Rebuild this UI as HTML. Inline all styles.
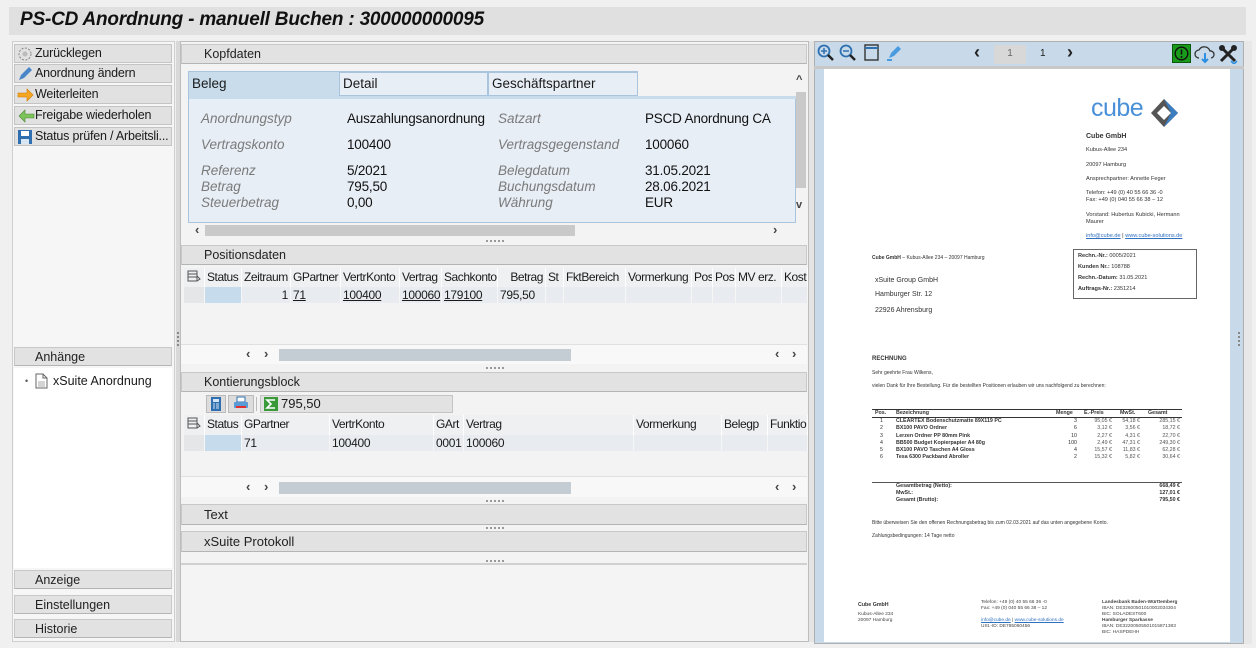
<!DOCTYPE html>
<html><head><meta charset="utf-8"><style>
*{box-sizing:border-box;margin:0;padding:0}
body{width:1256px;height:648px;background:#f0f0f0;font-family:"Liberation Sans",sans-serif;font-size:12px;color:#1a1a1a;position:relative;overflow:hidden}
.a{position:absolute}
.hdr{position:absolute;background:#e2e2e2;border:1px solid #c8c8c8;border-bottom-color:#b4b4b4;font-size:12.5px;padding:2px 0 0 22px;color:#222}
.btn{position:absolute;left:14px;width:158px;height:19px;background:#e1e1e1;border:1px solid #c4c4c4;font-size:12.5px;padding:1px 0 0 20px;white-space:nowrap;letter-spacing:-0.2px}
.btn svg{position:absolute;left:2px;top:1px}
.lb{position:absolute;color:#7a7a7a;font-style:italic;font-size:13.5px}
.vl{position:absolute;color:#111;font-size:13.5px;letter-spacing:-0.2px}
.th{position:absolute;height:19px;font-size:12px;letter-spacing:-0.45px;padding:2px 0 0 2px;border-right:1px solid #fff;white-space:nowrap;overflow:hidden;background:#eef0f2}
.td{position:absolute;height:16px;font-size:12px;letter-spacing:-0.3px;padding:1px 2px;white-space:nowrap;overflow:hidden;background:#e8ecf0;border-right:1px solid #f6f6f6}
.u{text-decoration:underline}
.hs{position:absolute;height:12px;background:#c4ccd4}
.arr{position:absolute;font-size:13px;color:#444;font-weight:bold}
.dots{position:absolute;height:2px;width:18px;border-top:2px dotted #999}
.inv{position:absolute;font-size:5.6px;color:#333;white-space:nowrap}
.b{font-weight:bold}
</style></head><body>

<!-- title -->
<div class="a" style="left:9px;top:7px;width:1237px;height:28px;background:#e0e0e0"></div>
<div class="a" style="left:20px;top:9px;font-size:19px;font-weight:bold;font-style:italic;color:#111;letter-spacing:-0.2px">PS-CD Anordnung - manuell Buchen : 300000000095</div>

<!-- left panel -->
<div class="a" style="left:12px;top:41px;width:163px;height:601px;background:#f6f6f6;border:1px solid #cfcfcf"></div>
<div class="btn" style="top:44px"><svg width="16" height="16"><circle cx="8" cy="8" r="6" fill="none" stroke="#888" stroke-dasharray="2 1.5"/><circle cx="8" cy="8" r="2.5" fill="#bbb"/></svg>Zurücklegen</div>
<div class="btn" style="top:64px"><svg width="16" height="16"><path d="M2 14 L4 9 L12 1 L15 4 L7 12 Z" fill="#4a86c8"/></svg>Anordnung ändern</div>
<div class="btn" style="top:85px"><svg width="18" height="16"><path d="M1 6h9V2l6 6-6 6v-4H1z" fill="#f5a623" stroke="#d07800" stroke-width=".6"/></svg>Weiterleiten</div>
<div class="btn" style="top:106px"><svg width="18" height="16"><path d="M17 6H8V2L2 8l6 6v-4h9z" fill="#7cc35c" stroke="#4a8a30" stroke-width=".6"/></svg>Freigabe wiederholen</div>
<div class="btn" style="top:127px"><svg width="16" height="16"><rect x="1" y="1" width="14" height="14" fill="#2f6fb0"/><rect x="4" y="2" width="8" height="5" fill="#fff"/><rect x="4" y="10" width="8" height="5" fill="#d8e6f3"/></svg>Status prüfen / Arbeitsli...</div>
<div class="hdr" style="left:14px;top:347px;width:158px;height:19px;padding-left:20px">Anhänge</div>
<div class="a" style="left:14px;top:368px;width:158px;height:200px;background:#fff"></div>
<div class="a" style="left:25px;top:376px;font-size:9px;color:#555">•</div>
<svg class="a" style="left:35px;top:373px" width="13" height="16"><path d="M1 1h7l4 4v10H1z" fill="#fff" stroke="#666"/><path d="M8 1v4h4" fill="none" stroke="#666"/><path d="M3 9h7M3 11h7M3 13h7" stroke="#aaa"/></svg>
<div class="a" style="left:53px;top:374px;font-size:12.5px">xSuite Anordnung</div>
<div class="hdr" style="left:14px;top:570px;width:158px;height:19px;padding-left:20px">Anzeige</div>
<div class="hdr" style="left:14px;top:595px;width:158px;height:19px;padding-left:20px">Einstellungen</div>
<div class="hdr" style="left:14px;top:619px;width:158px;height:19px;padding-left:20px">Historie</div>
<div class="a" style="left:176px;top:41px;width:4px;height:601px;background:#d8d8d8"></div>
<div class="a" style="left:177px;top:332px;width:2px;height:14px;border-left:2px dotted #888"></div>

<!-- middle -->
<div class="a" style="left:180px;top:41px;width:629px;height:601px;background:#f3f3f3;border:1px solid #bdbdbd"></div>
<div class="hdr" style="left:181px;top:44px;width:626px;height:20px">Kopfdaten</div>
<div class="a" style="left:188px;top:71px;width:608px;height:152px;background:#e8eef6;border:1px solid #a9c4dc"></div>
<div class="a" style="left:189px;top:72px;width:150px;height:24px;background:#c8dcec;font-size:13.5px;padding:4px 3px">Beleg</div>
<div class="a" style="left:339px;top:72px;width:149px;height:24px;background:#e8eef6;border:1px solid #a9c4dc;font-size:13.5px;padding:3px 3px">Detail</div>
<div class="a" style="left:488px;top:72px;width:150px;height:24px;background:#e8eef6;border:1px solid #a9c4dc;font-size:13.5px;padding:3px 3px">Geschäftspartner</div>
<div class="a" style="left:638px;top:71px;width:158px;height:25px;background:#f3f3f3"></div>
<div class="a" style="left:189px;top:96px;width:607px;height:3px;background:#c8dcec"></div>
<div class="lb" style="left:201px;top:111px">Anordnungstyp</div><div class="vl" style="left:347px;top:111px">Auszahlungsanordnung</div>
<div class="lb" style="left:498px;top:111px">Satzart</div><div class="vl" style="left:645px;top:111px">PSCD Anordnung CA</div>
<div class="lb" style="left:201px;top:137px">Vertragskonto</div><div class="vl" style="left:347px;top:137px">100400</div>
<div class="lb" style="left:498px;top:137px">Vertragsgegenstand</div><div class="vl" style="left:645px;top:137px">100060</div>
<div class="lb" style="left:201px;top:163px">Referenz</div><div class="vl" style="left:347px;top:163px">5/2021</div>
<div class="lb" style="left:498px;top:163px">Belegdatum</div><div class="vl" style="left:645px;top:163px">31.05.2021</div>
<div class="lb" style="left:201px;top:179px">Betrag</div><div class="vl" style="left:347px;top:179px">795,50</div>
<div class="lb" style="left:498px;top:179px">Buchungsdatum</div><div class="vl" style="left:645px;top:179px">28.06.2021</div>
<div class="lb" style="left:201px;top:195px">Steuerbetrag</div><div class="vl" style="left:347px;top:195px">0,00</div>
<div class="lb" style="left:498px;top:195px">Währung</div><div class="vl" style="left:645px;top:195px">EUR</div>
<div class="a" style="left:796px;top:71px;width:11px;height:152px;background:#f3f3f3"></div>
<div class="a" style="left:796px;top:92px;width:10px;height:96px;background:#c9c9c9"></div>
<div class="arr" style="left:796px;top:74px;font-size:11px">^</div>
<div class="arr" style="left:796px;top:199px;font-size:11px">v</div>
<div class="a" style="left:188px;top:224px;width:608px;height:14px;background:#f3f3f3"></div>
<div class="a" style="left:205px;top:225px;width:370px;height:11px;background:#c9c9c9"></div>
<div class="arr" style="left:195px;top:222px">‹</div><div class="arr" style="left:773px;top:222px">›</div>
<div class="dots" style="left:486px;top:240px"></div>

<div class="hdr" style="left:181px;top:245px;width:626px;height:20px">Positionsdaten</div>
<div class="th" style="left:184px;top:268px;width:21px;padding-left:3px"><svg width="14" height="12"><rect x="1" y="1" width="9" height="10" fill="none" stroke="#555"/><path d="M1 4h9M1 7h9M10 6l3 3-3 2" stroke="#555" fill="none"/></svg></div>
<div class="th" style="left:205px;top:268px;width:37px">Status</div>
<div class="th" style="left:242px;top:268px;width:49px">Zeitraum</div>
<div class="th" style="left:291px;top:268px;width:50px">GPartner</div>
<div class="th" style="left:341px;top:268px;width:59px">VertrKonto</div>
<div class="th" style="left:400px;top:268px;width:42px">Vertrag</div>
<div class="th" style="left:442px;top:268px;width:56px">Sachkonto</div>
<div class="th" style="left:498px;top:268px;width:48px;text-align:right;padding-right:2px">Betrag</div>
<div class="th" style="left:546px;top:268px;width:18px">St</div>
<div class="th" style="left:564px;top:268px;width:62px">FktBereich</div>
<div class="th" style="left:626px;top:268px;width:66px">Vormerkung</div>
<div class="th" style="left:692px;top:268px;width:21px">Pos</div>
<div class="th" style="left:713px;top:268px;width:23px">Pos</div>
<div class="th" style="left:736px;top:268px;width:46px">MV erz.</div>
<div class="th" style="left:782px;top:268px;width:26px">Kost</div>
<div class="td" style="left:184px;top:287px;width:21px;background:#e4e6e8"></div>
<div class="td" style="left:205px;top:287px;width:37px;background:#c6dcec"></div>
<div class="td" style="left:242px;top:287px;width:49px;text-align:right">1</div>
<div class="td u" style="left:291px;top:287px;width:50px">71</div>
<div class="td u" style="left:341px;top:287px;width:59px">100400</div>
<div class="td u" style="left:400px;top:287px;width:42px">100060</div>
<div class="td u" style="left:442px;top:287px;width:56px">179100</div>
<div class="td" style="left:498px;top:287px;width:48px">795,50</div>
<div class="td" style="left:546px;top:287px;width:18px"></div>
<div class="td" style="left:564px;top:287px;width:62px"></div>
<div class="td" style="left:626px;top:287px;width:66px"></div>
<div class="td" style="left:692px;top:287px;width:21px"></div>
<div class="td" style="left:713px;top:287px;width:23px"></div>
<div class="td" style="left:736px;top:287px;width:46px"></div>
<div class="td" style="left:782px;top:287px;width:26px"></div>
<div class="a" style="left:181px;top:344px;width:626px;height:20px;background:#f8f8f8;border-top:1px solid #e0e0e0"></div>
<div class="hs" style="left:279px;top:349px;width:292px"></div>
<div class="arr" style="left:246px;top:346px">‹</div><div class="arr" style="left:264px;top:346px">›</div>
<div class="arr" style="left:775px;top:346px">‹</div><div class="arr" style="left:792px;top:346px">›</div>
<div class="dots" style="left:486px;top:367px"></div>

<div class="hdr" style="left:181px;top:372px;width:626px;height:20px">Kontierungsblock</div>
<div class="a" style="left:206px;top:395px;width:20px;height:18px;background:#dcdcdc;border:1px solid #bbb"></div>
<svg class="a" style="left:210px;top:397px" width="12" height="14"><rect x="1" y="0" width="10" height="14" fill="#2f6fb0"/><rect x="3" y="2" width="6" height="3" fill="#d0e4f5"/><path d="M3 7h2M6 7h3M3 9h2M6 9h3M3 11h2M6 11h3" stroke="#d0e4f5"/></svg>
<div class="a" style="left:228px;top:395px;width:26px;height:18px;background:#dcdcdc;border:1px solid #bbb"></div>
<svg class="a" style="left:232px;top:396px" width="18" height="16"><rect x="5" y="1" width="8" height="5" fill="#fff" stroke="#2f6fb0"/><rect x="2" y="6" width="14" height="6" rx="1" fill="#5b9bd5"/><rect x="4" y="10" width="10" height="2" fill="#e03030"/></svg>
<div class="a" style="left:256px;top:397px;width:1px;height:14px;background:#bbb"></div>
<div class="a" style="left:260px;top:395px;width:193px;height:18px;background:#e2e2e2;border:1px solid #c4c4c4"></div>
<svg class="a" style="left:264px;top:397px" width="14" height="14"><rect width="14" height="14" fill="#3a9a3a"/><path d="M11 3H3l4 4-4 4h8" fill="none" stroke="#fff" stroke-width="1.6"/></svg>
<div class="a" style="left:281px;top:396px;font-size:13px">795,50</div>
<div class="th" style="left:184px;top:415px;width:21px;padding-left:3px;height:20px"><svg width="14" height="12"><rect x="1" y="1" width="9" height="10" fill="none" stroke="#555"/><path d="M1 4h9M1 7h9M10 6l3 3-3 2" stroke="#555" fill="none"/></svg></div>
<div class="th" style="left:205px;top:415px;width:37px;height:20px">Status</div>
<div class="th" style="left:242px;top:415px;width:88px;height:20px">GPartner</div>
<div class="th" style="left:330px;top:415px;width:104px;height:20px">VertrKonto</div>
<div class="th" style="left:434px;top:415px;width:30px;height:20px">GArt</div>
<div class="th" style="left:464px;top:415px;width:170px;height:20px">Vertrag</div>
<div class="th" style="left:634px;top:415px;width:88px;height:20px">Vormerkung</div>
<div class="th" style="left:722px;top:415px;width:46px;height:20px">Belegp</div>
<div class="th" style="left:768px;top:415px;width:40px;height:20px">Funktio</div>
<div class="td" style="left:184px;top:435px;width:21px;background:#e4e6e8"></div>
<div class="td" style="left:205px;top:435px;width:37px;background:#c6dcec"></div>
<div class="td" style="left:242px;top:435px;width:88px">71</div>
<div class="td" style="left:330px;top:435px;width:104px">100400</div>
<div class="td" style="left:434px;top:435px;width:30px">0001</div>
<div class="td" style="left:464px;top:435px;width:170px">100060</div>
<div class="td" style="left:634px;top:435px;width:88px"></div>
<div class="td" style="left:722px;top:435px;width:46px"></div>
<div class="td" style="left:768px;top:435px;width:40px"></div>
<div class="a" style="left:181px;top:476px;width:626px;height:21px;background:#f8f8f8;border-top:1px solid #e0e0e0"></div>
<div class="hs" style="left:279px;top:482px;width:292px"></div>
<div class="arr" style="left:246px;top:479px">‹</div><div class="arr" style="left:264px;top:479px">›</div>
<div class="arr" style="left:775px;top:479px">‹</div><div class="arr" style="left:792px;top:479px">›</div>
<div class="dots" style="left:486px;top:500px"></div>
<div class="hdr" style="left:181px;top:504px;width:626px;height:21px;font-size:13px">Text</div>
<div class="dots" style="left:486px;top:527px"></div>
<div class="hdr" style="left:181px;top:531px;width:626px;height:21px;font-size:13px">xSuite Protokoll</div>
<div class="dots" style="left:486px;top:560px"></div>
<div class="a" style="left:181px;top:563px;width:626px;height:78px;background:#f4f4f4;border-top:2px solid #d0d0d0"></div>

<div class="a" style="left:809px;top:41px;width:5px;height:601px;background:#e4e4e4"></div>

<!-- right viewer -->
<div class="a" style="left:814px;top:41px;width:430px;height:603px;background:#c8dae9;border:1px solid #b0b0b0"></div>
<div class="a" style="left:1244px;top:41px;width:8px;height:603px;background:#e8e8e8"></div>
<div class="a" style="left:1238px;top:332px;width:2px;height:14px;border-left:2px dotted #888"></div>
<svg class="a" style="left:817px;top:43px" width="90" height="22">
<circle cx="7" cy="8" r="5.5" fill="none" stroke="#2e6fb0" stroke-width="1.8"/><path d="M4 8h6M7 5v6" stroke="#2e6fb0" stroke-width="1.5"/><path d="M11 12l5 5" stroke="#222" stroke-width="2.5"/>
<circle cx="29" cy="8" r="5.5" fill="none" stroke="#2e6fb0" stroke-width="1.8"/><path d="M26 8h6" stroke="#2e6fb0" stroke-width="1.5"/><path d="M33 12l5 5" stroke="#222" stroke-width="2.5"/>
<rect x="48" y="2" width="13" height="15" fill="none" stroke="#333" stroke-width="1.4"/><path d="M48 5h13" stroke="#2e6fb0" stroke-width="2"/>
<path d="M72 15l2-5 7-7 3 3-7 7z" fill="#4a9ae0"/><path d="M70 17h5" stroke="#4a9ae0" stroke-width="2"/>
</svg>
<div class="a" style="left:974px;top:42px;font-size:18px;font-weight:bold;color:#222">‹</div>
<div class="a" style="left:994px;top:45px;width:32px;height:19px;background:#d8d8d8;font-size:10px;color:#666;text-align:center;padding-top:3px">1</div>
<div class="a" style="left:1040px;top:48px;font-size:10px">1</div>
<div class="a" style="left:1067px;top:42px;font-size:18px;font-weight:bold;color:#222">›</div>
<div class="a" style="left:1172px;top:44px;width:19px;height:19px;background:#1a9a1a;border:1px solid #0a5a0a"></div>
<svg class="a" style="left:1174px;top:46px" width="15" height="15"><circle cx="7.5" cy="7.5" r="6.3" fill="none" stroke="#111" stroke-width="1.4"/><path d="M7.5 3.5v5" stroke="#111" stroke-width="1.6"/><circle cx="7.5" cy="11" r="1" fill="#111"/></svg>
<svg class="a" style="left:1194px;top:44px" width="22" height="20"><path d="M5 14a4 4 0 0 1 0-8 6 6 0 0 1 11 1 3.5 3.5 0 0 1 1 7" fill="none" stroke="#333" stroke-width="1.3"/><path d="M11 9v9M8 15l3 3 3-3" fill="none" stroke="#2e8ee0" stroke-width="2"/></svg>
<svg class="a" style="left:1218px;top:44px" width="22" height="20"><path d="M3 3l14 14M17 3L3 17" stroke="#222" stroke-width="3"/><circle cx="4" cy="4" r="3" fill="#222"/><circle cx="16" cy="4" r="3" fill="#222"/><path d="M13 17l3 3 3-3" fill="none" stroke="#2e8ee0" stroke-width="1.6"/></svg>
<div class="a" style="left:814px;top:66px;width:430px;height:3px;background:#c8c8c8"></div>
<div class="a" style="left:824px;top:69px;width:406px;height:573px;background:#fff"></div>

<!-- invoice -->
<div class="a" style="left:1091px;top:94px;font-size:25px;color:#4a90d9;letter-spacing:-0.5px;font-weight:300">cube</div>
<svg class="a" style="left:1150px;top:98px" width="30" height="30"><path d="M14 1L28 15 14 29 1 15Z" fill="#555"/><path d="M14 1L28 15 14 29 21 15Z" fill="#3b7dbf"/><path d="M14 8L21 15 14 22 7 15Z" fill="#fff"/></svg>
<div class="inv b" style="left:1086px;top:133px;font-size:7px">Cube GmbH</div>
<div class="inv" style="left:1086px;top:147px">Kubus-Allee 234</div>
<div class="inv" style="left:1086px;top:162px">20097 Hamburg</div>
<div class="inv" style="left:1086px;top:176px">Ansprechpartner: Annette Feger</div>
<div class="inv" style="left:1086px;top:190px">Telefon: +49 (0) 40 55 66 36 -0</div>
<div class="inv" style="left:1086px;top:197px">Fax: +49 (0) 040 55 66 38 – 12</div>
<div class="inv" style="left:1086px;top:212px">Vorstand: Hubertus Kubicki, Hermann</div>
<div class="inv" style="left:1086px;top:219px">Maurer</div>
<div class="inv" style="left:1086px;top:233px;color:#2e6fc0"><span class="u">info@cube.de</span> <span style="color:#333">|</span> <span class="u">www.cube-solutions.de</span></div>
<div class="inv" style="left:872px;top:255px;font-size:5px"><b>Cube GmbH</b> – Kubus-Allee 234 – 20097 Hamburg</div>
<div class="a" style="left:1073px;top:249px;width:124px;height:50px;border:1px solid #666"></div>
<div class="inv" style="left:1078px;top:253px"><b>Rechn.-Nr.:</b> 0005/2021</div>
<div class="inv" style="left:1078px;top:264px"><b>Kunden Nr.:</b> 108788</div>
<div class="inv" style="left:1078px;top:275px"><b>Rechn.-Datum:</b> 31.05.2021</div>
<div class="inv" style="left:1078px;top:286px"><b>Auftrags-Nr.:</b> 2351214</div>
<div class="inv" style="left:875px;top:277px;font-size:7px">xSuite Group GmbH</div>
<div class="inv" style="left:875px;top:291px;font-size:7px">Hamburger Str. 12</div>
<div class="inv" style="left:875px;top:307px;font-size:7px">22926 Ahrensburg</div>
<div class="inv b" style="left:872px;top:356px;font-size:6px">RECHNUNG</div>
<div class="inv" style="left:872px;top:370px;font-size:5px">Sehr geehrte Frau Wilkens,</div>
<div class="inv" style="left:872px;top:383px;font-size:5px">vielen Dank für Ihre Bestellung. Für die bestellten Positionen erlauben wir uns nachfolgend zu berechnen:</div>
<div class="a" style="left:872px;top:409px;width:310px;border-top:1px solid #333"></div>
<div class="a" style="left:872px;top:417px;width:310px;border-top:1px solid #333"></div>
<div class="inv b" style="left:875px;top:410px;font-size:5.3px">Pos.</div>
<div class="inv b" style="left:896px;top:410px;font-size:5.3px">Bezeichnung</div>
<div class="inv b" style="left:1056px;top:410px;font-size:5.3px">Menge</div>
<div class="inv b" style="left:1084px;top:410px;font-size:5.3px">E.-Preis</div>
<div class="inv b" style="left:1120px;top:410px;font-size:5.3px">MwSt.</div>
<div class="inv b" style="left:1148px;top:410px;font-size:5.3px">Gesamt</div>
<div class="a" style="left:880px;top:418px;font-size:5.3px;line-height:7.3px;color:#333">1<br>2<br>3<br>4<br>5<br>6</div>
<div class="a b" style="left:896px;top:418px;font-size:5.3px;line-height:7.3px;color:#333;white-space:nowrap">CLEARTEX Bodenschutzmatte 89X119 PC<br>BX100 PAVO Ordner<br>Lerzen Ordner PP 80mm Pink<br>BB500 Budget Kopierpapier A4 80g<br>BX100 PAVO Taschen A4 Gloss<br>Tesa 6300 Packband Abroller</div>
<div class="a" style="left:1055px;top:418px;width:22px;text-align:right;font-size:5.3px;line-height:7.3px;color:#333">3<br>6<br>10<br>100<br>4<br>2</div>
<div class="a" style="left:1080px;top:418px;width:32px;text-align:right;font-size:5.3px;line-height:7.3px;color:#555">95,05 €<br>3,12 €<br>2,27 €<br>2,49 €<br>15,57 €<br>15,32 €</div>
<div class="a" style="left:1110px;top:418px;width:30px;text-align:right;font-size:5.3px;line-height:7.3px;color:#555">54,18 €<br>3,56 €<br>4,31 €<br>47,31 €<br>11,83 €<br>5,82 €</div>
<div class="a" style="left:1145px;top:418px;width:35px;text-align:right;font-size:5.3px;line-height:7.3px;color:#555">285,15 €<br>18,72 €<br>22,70 €<br>249,30 €<br>62,28 €<br>30,64 €</div>
<div class="a" style="left:872px;top:482px;width:310px;border-top:1px solid #555"></div>
<div class="a b" style="left:896px;top:483px;font-size:5.3px;line-height:7px;color:#333">Gesamtbetrag (Netto):<br>MwSt.:<br>Gesamt (Brutto):</div>
<div class="a b" style="left:1140px;top:483px;width:40px;text-align:right;font-size:5.3px;line-height:7px;color:#333">668,49 €<br>127,01 €<br>795,50 €</div>
<div class="inv" style="left:872px;top:520px;font-size:5px">Bitte überweisen Sie den offenen Rechnungsbetrag bis zum 02.03.2021 auf das unten angegebene Konto.</div>
<div class="inv" style="left:872px;top:533px;font-size:5px">Zahlungsbedingungen: 14 Tage netto</div>
<div class="inv b" style="left:858px;top:602px;font-size:5.3px">Cube GmbH</div>
<div class="a" style="left:858px;top:612px;font-size:4.8px;line-height:6px;color:#444">Kubus-Allee 234<br>20097 Hamburg</div>
<div class="a" style="left:981px;top:600px;font-size:4.8px;line-height:6px;color:#444;white-space:nowrap">Telefon: +49 (0) 40 55 66 36 -0<br>Fax: +49 (0) 040 55 66 38 – 12<br><br><span style="color:#2e6fc0" class="u">info@cube.de</span> | <span style="color:#2e6fc0" class="u">www.cube-solutions.de</span><br>USt.-ID: DE785060456</div>
<div class="a" style="left:1102px;top:600px;font-size:4.8px;line-height:6px;color:#444;white-space:nowrap"><b>Landesbank Baden-Württemberg</b><br>IBAN: DE32600501010002034304<br>BIC: SOLADEST600<br><b>Hamburger Sparkasse</b><br>IBAN: DE32200505501015871383<br>BIC: HASPDEHH</div>
</body></html>
